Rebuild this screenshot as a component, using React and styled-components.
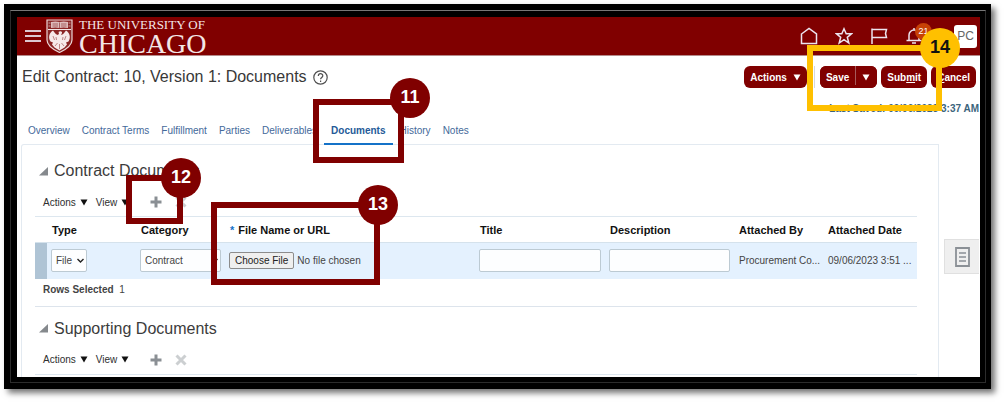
import React from 'react';
import styled, { createGlobalStyle } from 'styled-components';

const GlobalStyle = createGlobalStyle`
  * {
    box-sizing: border-box;
  }
  body {
    margin: 0;
    background-color: #ffffff;
    font-family: "Liberation Sans", Arial, sans-serif;
    font-size: 10px;
    color: #444444;
  }
  button, input, select {
    font-family: inherit;
    font-size: 10px;
    color: inherit;
  }
`;

const Page = styled.div`
  padding: 4px 13px 13px 4px;
`;

const Frame = styled.div`
  padding: 6px 5px 6px 6px;
  background-color: #000000;
  box-shadow: 4px 4px 6px rgba(0, 0, 0, .55);
`;

const FrameLine = styled.div`
  padding: 6px 5px 5px 6px;
  border: 1px solid #2c2c2c;
  border-top-color: #777777;
`;

const Screen = styled.div`
  position: relative;
  background-color: #ffffff;
`;

const Header = styled.header`
  display: flex;
  align-items: center;
  height: 39px;
  padding: 0 3px 0 8px;
  background-color: #800000;
  border-bottom: 1px solid #b58a8a;
`;

const IconButton = styled.button`
  position: relative;
  display: flex;
  padding: 0;
  border: 0;
  background: none;
  cursor: pointer;
`;

const Brand = styled.a`
  display: flex;
  align-items: center;
  gap: 6px;
  margin-left: 5px;
  color: #f3e6e6;
  font-family: "Liberation Serif", "Times New Roman", serif;
  text-decoration: none;
`;

const BrandName = styled.span`
  display: flex;
  flex-direction: column;
  padding-top: 3px;
  font-size: 28px;
  line-height: 26px;
`;

const BrandTop = styled.span`
  font-size: 13px;
  line-height: 12px;
`;

const HeaderIcons = styled.nav`
  display: flex;
  align-items: center;
  gap: 17px;
  margin-left: auto;
`;

const Badge = styled.span`
  position: absolute;
  top: -4px;
  left: 10px;
  width: 17px;
  height: 17px;
  border-radius: 50%;
  background-color: #c74106;
  color: #ffffff;
  font-size: 9px;
  line-height: 16px;
  text-align: center;
`;

const Avatar = styled.button`
  width: 23px;
  height: 23px;
  margin-left: 14px;
  padding: 0;
  border: 0;
  border-radius: 3px;
  background-color: #ffffff;
  color: #666666;
  font-size: 12px;
`;

const TitleRow = styled.div`
  display: flex;
  align-items: center;
  height: 42px;
  padding: 0 4px 0 5px;
`;

const Title = styled.h1`
  margin: 0 6px 0 0;
  font-size: 16px;
  font-weight: normal;
  color: #383838;
`;

const ButtonBar = styled.div`
  display: flex;
  align-items: center;
  gap: 4px;
  margin-left: auto;
`;

const Button = styled.button`
  display: flex;
  align-items: center;
  gap: 6px;
  height: 22px;
  padding: 0 6px;
  border: 0;
  border-radius: 6px;
  background-color: #800000;
  color: #ffffff;
  font-weight: bold;
`;

const SplitButton = styled.div`
  display: flex;
  border-radius: 6px;
  background-color: #800000;
`;

const SplitArrow = styled(Button)`
  position: relative;
  padding: 0 7px;
  &::before {
    content: '';
    position: absolute;
    left: 0;
    top: 0;
    height: 19px;
    border-left: 1px solid #a65a5a;
  }
`;

const Divider = styled.span`
  width: 1px;
  height: 22px;
  margin: 0 1px 0 3px;
  background-color: #d3d8de;
`;

const LastSaved = styled.p`
  margin: 0;
  padding: 5px 1px 0 0;
  color: #3c647c;
  font-weight: bold;
  line-height: 12px;
  text-align: right;
`;

const Tabs = styled.nav`
  display: flex;
  height: 29px;
  padding: 8px 11px 0;
`;

const Tab = styled.a`
  position: relative;
  height: 22px;
  padding: 0 ${({ $active }) => ($active ? 7 : 0)}px;
  margin-right: ${({ $active, $beforeActive }) => (($active || $beforeActive) ? 7 : 12)}px;
  border-bottom: 2px solid ${({ $active }) => ($active ? '#1472c8' : 'transparent')};
  color: ${({ $active }) => ($active ? '#245a98' : '#44699a')};
  font-weight: ${({ $active }) => ($active ? 'bold' : 'normal')};
  line-height: 16px;
  text-decoration: none;
`;

const Columns = styled.div`
  display: flex;
  padding-left: 4px;
`;

const Panel = styled.main`
  flex: 1;
  min-width: 0;
  padding: 13px 21px 0 13px;
  border: 1px solid #e3eaf1;
  border-bottom: 0;
  border-top-left-radius: 3px;
`;

const Aside = styled.aside`
  width: 41px;
  padding: 95px 1px 0 5px;
`;

const SideTab = styled.button`
  display: flex;
  align-items: center;
  justify-content: center;
  width: 100%;
  height: 35px;
  padding: 0;
  border: 1px solid #e0e0e0;
  border-right: 0;
  background-color: #efefef;
`;

const Section = styled.section`
  & + & {
    padding-top: 9px;
    border-top: 1px solid #dde4ec;
  }
`;

const SectionTitle = styled.h2`
  display: flex;
  align-items: center;
  gap: 6px;
  margin: 0;
  padding-left: 4px;
  font-size: 16px;
  font-weight: normal;
  line-height: 26px;
  color: #3c3c3c;
`;

const Toolbar = styled.div`
  display: flex;
  align-items: center;
  height: 32px;
  padding: 4px 0 0 8px;
`;

const MenuButton = styled.button`
  display: flex;
  align-items: center;
  gap: 4px;
  margin-right: 8px;
  padding: 0;
  border: 0;
  background: none;
  color: #2e2e2e;
`;

const ToolButton = styled(IconButton)`
  margin-left: 13px;
`;

const Table = styled.table`
  width: 100%;
  table-layout: fixed;
  border-collapse: collapse;
  border-top: 1px solid #dde7ef;
`;

const Col = styled.col`
  width: ${({ $width }) => $width}px;
`;

const HeadCell = styled.th`
  height: 26px;
  padding: 0 5px;
  border-bottom: 1px solid #d5e2ec;
  color: #111111;
  font-size: 11px;
  text-align: left;
  white-space: nowrap;
`;

const Required = styled.span`
  margin-right: 4px;
  color: #1472c8;
`;

const Row = styled.tr`
  background-color: #e4f1fe;
`;

const Cell = styled.td`
  height: 36px;
  padding: 0 0 0 5px;
  white-space: nowrap;
`;

const FieldCell = styled(Cell)`
  padding: 0 4px;
`;

const RowHandle = styled.td`
  padding: 0;
  background-color: #afc4d5;
`;

const TextBox = styled.input`
  display: block;
  width: 100%;
  height: 23px;
  padding: 0 4px;
  border: 1px solid #bccad3;
  border-radius: 2px;
  background-color: #fdfeff;
`;

const SelectBox = styled.div`
  position: relative;
  display: flex;
  align-items: center;
  width: ${({ $width }) => $width};
  svg {
    position: absolute;
    right: 2px;
    pointer-events: none;
  }
`;

const Select = styled.select`
  appearance: none;
  width: 100%;
  height: 23px;
  padding: 0 4px;
  border: 1px solid #bccad3;
  border-radius: 2px;
  background-color: #fdfeff;
`;

const FileInput = styled.input`
  display: block;
  width: 100%;
  &::file-selector-button {
    height: 17px;
    margin-right: 3px;
    padding: 0 5px;
    border: 1px solid #8c8c8c;
    border-radius: 2px;
    background-color: #efefef;
    color: #222222;
    font-family: inherit;
    font-size: 10px;
  }
`;

const TableFooter = styled.p`
  margin: 0;
  padding: 5px 8px 10px;
  line-height: 12px;
  b {
    margin-right: 3px;
  }
`;

const NextTable = styled.div`
  height: 3px;
  border-top: 1px solid #dde7ef;
`;

const Callout = styled.div`
  position: absolute;
  top: ${({ $top }) => $top}px;
  ${({ $left, $right }) => ($right === undefined ? `left: ${$left}px;` : `right: ${$right}px;`)}
  width: ${({ $width }) => $width}px;
  height: ${({ $height }) => $height}px;
  border: 6px solid ${({ $color }) => $color};
  pointer-events: none;
`;

const CalloutNumber = styled.span`
  position: absolute;
  top: ${({ $outside }) => ($outside ? -27 : -23)}px;
  right: ${({ $outside }) => ($outside ? -32 : -24)}px;
  width: 40px;
  height: 40px;
  border-radius: 50%;
  background-color: ${({ $color }) => $color};
  color: ${({ $ink }) => $ink};
  font-size: 18px;
  font-weight: bold;
  line-height: 38px;
  text-align: center;
`;

const Shield = () => (
  <svg width="27" height="34" viewBox="0 0 27 34" aria-hidden="true">
    <path d="M1 1h25v20c0 6-6 9.500-12.500 12.500c-6.500-3-12.500-6.500-12.500-12.500z" fill="#8a2626" stroke="#ecd6d6" strokeWidth="1.200" />
    <path d="M2 10.500h23" stroke="#f3e6e6" strokeWidth="1" />
    <path d="M5 3q4.500-1 8.500 0q4-1 8.500 0v6q-4.500-1-8.500 0q-4-1-8.500 0z" fill="#ddbcbc" />
    <path d="M2.500 4h2M2.500 7h2M22.500 4h2M22.500 7h2" stroke="#c79a9a" strokeWidth="1" />
    <path d="M6.500 5h5.500M15 5h5.500M6.500 7h5.500M15 7h5.500M13.500 3.500v5.500" stroke="#8f3b3b" strokeWidth=".7" />
    <path d="M12.500 13c1.500-1.500 4-.8 3.500 1l-1 2c2 0 3.500-2.500 5-4.500c4 2.500 5 7 2.500 11l-2.500 1l1 2l-2.500 3l-5 3l-5-3l-2.500-3l1-2l-2.500-1c-2.500-4-1.500-8.500 2.500-11c1.500 2 3 4.500 5 4.500l1-1.500z" fill="#f6eaea" />
    <path d="M7 17l1.500 4M10 18l.5 3M20 17l-1.500 4M17 18l-.5 3M9 27l2.500-3M13.500 30v-5M18 27l-2.500-3" stroke="#a55a5a" strokeWidth=".7" fill="none" />
  </svg>
);

const Arrow = ({ color = '#111111' }) => (
  <svg width="8" height="7" viewBox="0 0 8 7" aria-hidden="true">
    <path d="M.5.5h7L4 6.500z" fill={color} />
  </svg>
);

const Chevron = () => (
  <svg width="9" height="6" viewBox="0 0 9 6" aria-hidden="true">
    <path d="M1.500 1L4.500 4L7.500 1" fill="none" stroke="#222222" strokeWidth="1.400" />
  </svg>
);

const HeaderIcon = ({ d, label, children }) => (
  <IconButton aria-label={label}>
    <svg width="18" height="18" viewBox="0 0 18 18" fill="none" stroke="#ece4ee" strokeWidth="1.500" aria-hidden="true">
      <path d={d} />
    </svg>
    {children}
  </IconButton>
);

const Plus = () => (
  <svg width="12" height="12" viewBox="0 0 12 12" aria-hidden="true">
    <path d="M6 .5v11M.5 6h11" stroke="#8a8f94" strokeWidth="3" />
  </svg>
);

const Cross = () => (
  <svg width="12" height="12" viewBox="0 0 12 12" aria-hidden="true">
    <path d="M1.500 1.500l9 9M10.500 1.500l-9 9" stroke="#cccfd1" strokeWidth="3" />
  </svg>
);

const SectionHeading = ({ children }) => (
  <SectionTitle>
    <svg width="9" height="9" viewBox="0 0 9 9" aria-hidden="true">
      <path d="M9 0v8.500H0z" fill="#85898d" />
    </svg>
    {children}
  </SectionTitle>
);

const SectionToolbar = () => (
  <Toolbar>
    <MenuButton>
      Actions
      <Arrow />
    </MenuButton>
    <MenuButton>
      View
      <Arrow />
    </MenuButton>
    <ToolButton aria-label="Add">
      <Plus />
    </ToolButton>
    <ToolButton aria-label="Delete">
      <Cross />
    </ToolButton>
  </Toolbar>
);

const Step = ({ number, outside, color = '#800000', ink = '#ffffff', ...box }) => (
  <Callout $color={color} {...box}>
    <CalloutNumber $color={color} $ink={ink} $outside={outside}>{number}</CalloutNumber>
  </Callout>
);

const tabs = ['Overview', 'Contract Terms', 'Fulfillment', 'Parties', 'Deliverables', 'Documents', 'History', 'Notes'];

const App = () => (
  <Page>
    <GlobalStyle />
    <Frame>
      <FrameLine>
        <Screen>
          <Header>
            <IconButton aria-label="Menu">
              <svg width="16" height="14" viewBox="0 0 16 14" aria-hidden="true">
                <path d="M0 2h16M0 7h16M0 12h16" stroke="#dcc8d0" strokeWidth="2" />
              </svg>
            </IconButton>
            <Brand href="#home">
              <Shield />
              <BrandName>
                <BrandTop>THE UNIVERSITY OF</BrandTop>
                CHICAGO
              </BrandName>
            </Brand>
            <HeaderIcons>
              <HeaderIcon label="Home" d="M1.500 7L9 1.500L16.500 7v9.500h-15z" />
              <HeaderIcon label="Favorites" d="M9 1.800l2.200 5h5.300l-4.200 3.500l1.500 5.700L9 12.700L4.200 16l1.500-5.700L1.500 6.800h5.300z" />
              <HeaderIcon label="Watchlist" d="M2 1.500v15.500M2 2.500h14.500l-1 4l1 4h-14.500" />
              <HeaderIcon label="Notifications" d="M1.500 13.500h15M4 13v-5a5 5 0 0 1 10 0v5M7 16h4M9 1v2">
                <Badge>21</Badge>
              </HeaderIcon>
              <Avatar aria-label="Settings">PC</Avatar>
            </HeaderIcons>
          </Header>
          <TitleRow>
            <Title>Edit Contract: 10, Version 1: Documents</Title>
            <IconButton aria-label="Help">
              <svg width="15" height="15" viewBox="0 0 15 15" fill="none" stroke="#505050" aria-hidden="true">
                <circle cx="7.500" cy="7.500" r="6.700" strokeWidth="1.200" />
                <path d="M5.300 6c0-3 4.500-3 4.500-.3c0 1.800-2.200 1.700-2.200 3.600M7.600 10.500v1.500" strokeWidth="1.200" />
              </svg>
            </IconButton>
            <ButtonBar>
              <Button>
                Actions
                <Arrow color="#ffffff" />
              </Button>
              <Divider />
              <SplitButton>
                <Button>Save</Button>
                <SplitArrow aria-label="Save options">
                  <Arrow color="#ffffff" />
                </SplitArrow>
              </SplitButton>
              <Button>
                <span>
                  Sub
                  <u>m</u>
                  it
                </span>
              </Button>
              <Button>
                <span>
                  <u>C</u>
                  ancel
                </span>
              </Button>
            </ButtonBar>
          </TitleRow>
          <LastSaved>Last Saved: 09/06/2023 3:37 AM</LastSaved>
          <Tabs>
            {tabs.map((name, i) => (
              <Tab
                key={name}
                href={`#${name}`}
                $active={name === 'Documents'}
                $beforeActive={tabs[i + 1] === 'Documents'}
              >
                {name}
              </Tab>
            ))}
          </Tabs>
          <Columns>
            <Panel>
              <Section>
                <SectionHeading>Contract Documents</SectionHeading>
                <SectionToolbar />
                <Table>
                  <colgroup>
                    <Col $width={12} />
                    <Col $width={89} />
                    <Col $width={89} />
                    <col />
                    <Col $width={130} />
                    <Col $width={129} />
                    <Col $width={89} />
                    <Col $width={94} />
                  </colgroup>
                  <thead>
                    <tr>
                      <HeadCell aria-label="Selection" />
                      <HeadCell>Type</HeadCell>
                      <HeadCell>Category</HeadCell>
                      <HeadCell>
                        <Required>*</Required>
                        File Name or URL
                      </HeadCell>
                      <HeadCell>Title</HeadCell>
                      <HeadCell>Description</HeadCell>
                      <HeadCell>Attached By</HeadCell>
                      <HeadCell>Attached Date</HeadCell>
                    </tr>
                  </thead>
                  <tbody>
                    <Row>
                      <RowHandle />
                      <FieldCell>
                        <SelectBox $width="36px">
                          <Select aria-label="Type">
                            <option>File</option>
                          </Select>
                          <Chevron />
                        </SelectBox>
                      </FieldCell>
                      <FieldCell>
                        <SelectBox $width="100%">
                          <Select aria-label="Category">
                            <option>Contract</option>
                          </Select>
                          <Chevron />
                        </SelectBox>
                      </FieldCell>
                      <FieldCell>
                        <FileInput type="file" aria-label="File Name or URL" />
                      </FieldCell>
                      <FieldCell>
                        <TextBox aria-label="Title" />
                      </FieldCell>
                      <FieldCell>
                        <TextBox aria-label="Description" />
                      </FieldCell>
                      <Cell>Procurement Co...</Cell>
                      <Cell>09/06/2023 3:51 ...</Cell>
                    </Row>
                  </tbody>
                </Table>
                <TableFooter>
                  <b>Rows Selected</b>
                  {' 1'}
                </TableFooter>
              </Section>
              <Section>
                <SectionHeading>Supporting Documents</SectionHeading>
                <SectionToolbar />
                <NextTable />
              </Section>
            </Panel>
            <Aside>
              <SideTab aria-label="Contents">
                <svg width="15" height="20" viewBox="0 0 15 20" fill="none" stroke="#8b9096" aria-hidden="true">
                  <path d="M1 1h13v18H1z" strokeWidth="1.800" />
                  <path d="M4 6h7M4 10h7M4 14h7" strokeWidth="1.500" />
                </svg>
              </SideTab>
            </Aside>
          </Columns>
          <Step number="11" outside $left={296} $top={82} $width={91} $height={64} />
          <Step number="12" $left={109} $top={158} $width={57} $height={49} />
          <Step number="13" $left={194} $top={185} $width={169} $height={83} />
          <Step number="14" $right={38} $top={28} $width={135} $height={66} color="#ffc000" ink="#111111" />
        </Screen>
      </FrameLine>
    </Frame>
  </Page>
);

export default App;
